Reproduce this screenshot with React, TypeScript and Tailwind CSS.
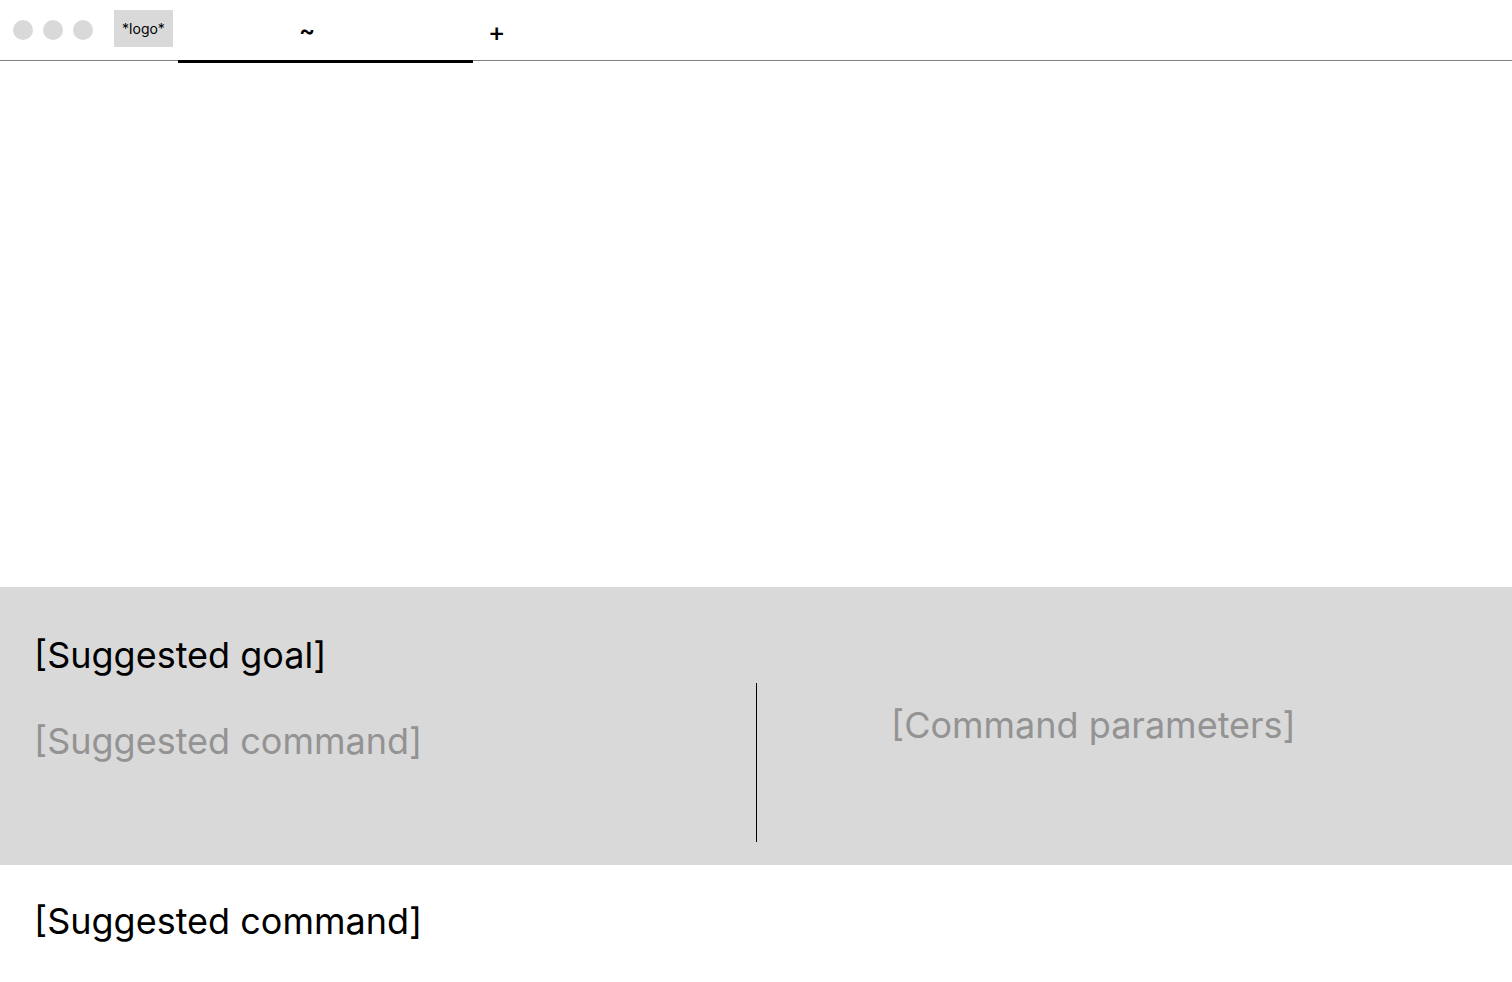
function TitleBar() {
  return (
    <div className="relative flex h-[61px] items-center border-b border-[#808080] bg-white">
      <div className="flex items-center gap-[10px] pl-[13px]">
        <span className="h-[20px] w-[20px] rounded-full bg-[#d9d9d9]" />
        <span className="h-[20px] w-[20px] rounded-full bg-[#d9d9d9]" />
        <span className="h-[20px] w-[20px] rounded-full bg-[#d9d9d9]" />
      </div>
      <div className="ml-[21px] mb-[3px] flex h-[37px] w-[59px] items-center justify-center bg-[#d9d9d9] text-[14px] text-black">
        *logo*
      </div>
      {/* active tab */}
      <div className="relative ml-[5px] flex h-full w-[295px] items-center pl-[121px] pt-[2px] text-[24px] font-semibold text-black">
        ~
        <span className="absolute -bottom-[3px] left-0 h-[3px] w-full bg-black" />
      </div>
      <div className="ml-[15px] flex items-center pt-[4px] text-[26px] font-medium leading-none text-black">
        +
      </div>
    </div>
  );
}

export default function App() {
  return (
    <div className="flex h-[982px] flex-col bg-white font-['Inter','Liberation_Sans',sans-serif]">
      <TitleBar />
      <div className="flex-1" />
      <div className="flex h-[278px] flex-col bg-[#d9d9d9] pt-[46px]">
        <div className="pl-[34px] text-[36px] leading-[44px] text-black">[Suggested goal]</div>
        <div className="mt-[6px] flex h-[159px]">
          <div className="w-[756px] pl-[34px] pt-[36px] text-[36px] leading-[44px] text-[#939393]">
            [Suggested command]
          </div>
          <div className="flex-1 border-l border-black pl-[134px] pt-[20px] text-[36px] leading-[44px] text-[#939393]">
            [Command parameters]
          </div>
        </div>
      </div>
      <div className="h-[117px] pl-[34px] pt-[34px] text-[36px] leading-[44px] text-black">
        [Suggested command]
      </div>
    </div>
  );
}
